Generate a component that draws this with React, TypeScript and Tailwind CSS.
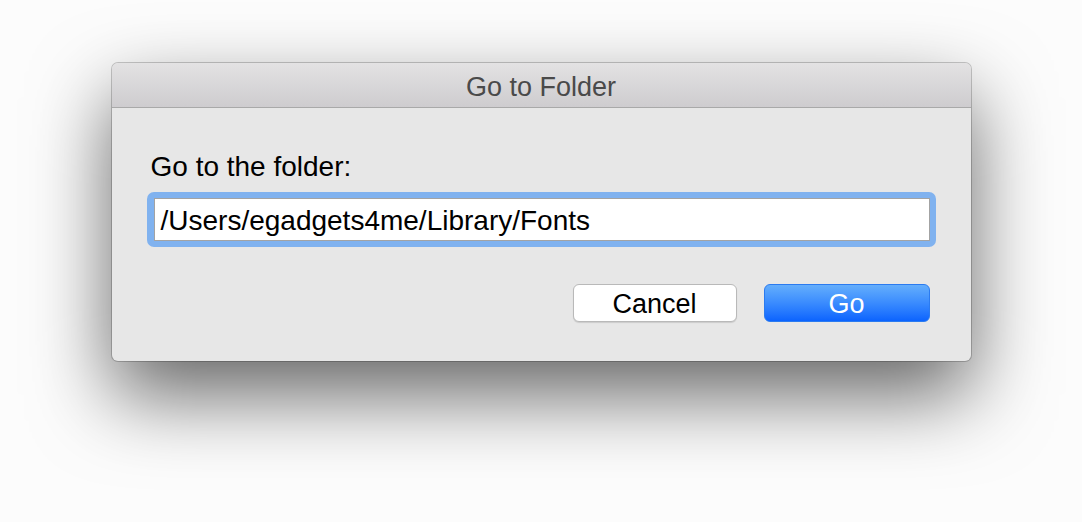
export default function App() {
  return (
    <div
      className="min-h-screen w-full bg-[#fcfcfc] pt-[63px]"
      style={{ fontFamily: '"Liberation Sans", Arial, sans-serif' }}
    >
      <div className="mx-auto w-[859px] overflow-hidden rounded-[6px] bg-[#e7e7e7] shadow-[0_0_0_1px_rgba(0,0,0,0.2),0_34px_80px_rgba(0,0,0,0.6)]">
        {/* title bar */}
        <div className="flex h-[45px] items-center justify-center border-b border-[#a9a9a9] bg-gradient-to-b from-[#e3e2e3] to-[#cecccf] pt-[4px]">
          <span className="text-[27px] leading-none text-[#4a4a4a]">Go to Folder</span>
        </div>

        {/* body */}
        <div className="px-[35px] pt-[43px] pb-[39px]">
          <div className="pl-[4px] text-[28px] leading-[32px] text-black">Go to the folder:</div>

          <div className="mt-[9px] rounded-[7px] bg-[#80b2ef] p-[6px] pl-[7px]">
            <div className="flex h-[43px] items-center border border-[#a3a3a3] bg-white pl-[6px] pt-[3px]">
              <span className="text-[28px] leading-none text-black">/Users/egadgets4me/Library/Fonts</span>
            </div>
          </div>

          <div className="mt-[37px] flex justify-end gap-[27px] pr-[6px]">
            <button className="h-[38px] w-[164px] rounded-[6px] border border-[#b9b9b9] bg-white pt-[2px] text-[27px] leading-none text-black shadow-[0_1px_1px_rgba(0,0,0,0.12)]">
              Cancel
            </button>
            <button className="h-[38px] w-[166px] rounded-[6px] border border-[#2b7bf0] bg-gradient-to-b from-[#64aefc] to-[#0b63fe] pt-[2px] text-[27px] leading-none text-white">
              Go
            </button>
          </div>
        </div>
      </div>
    </div>
  )
}
